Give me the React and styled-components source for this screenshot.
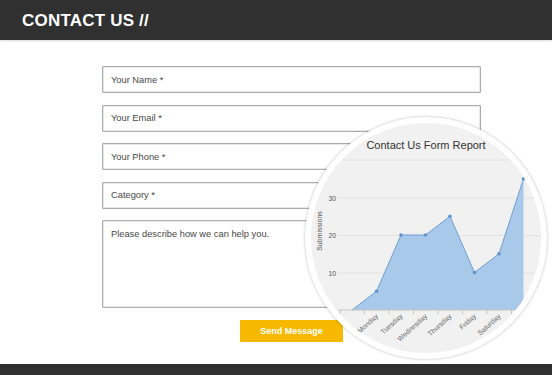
import React from 'react'
import styled, { createGlobalStyle } from 'styled-components'

const Global = createGlobalStyle`
  html, body {
    margin: 0;
    padding: 0;
    background: #fff;
    overflow: hidden;
  }
`;

const Page = styled.div`
  position: relative;
  width: 552px;
  height: 375px;
  font-family: "Liberation Sans", Arial, sans-serif;
`;

const Header = styled.div`
  height: 40px;
  background: #303030;
  display: flex;
  align-items: center;
  padding-left: 22px;
  box-shadow: 0 1px 2px rgba(0, 0, 0, 0.15);
`;

const Title = styled.h1`
  margin: 0;
  color: #fff;
  font-size: 17px;
  font-weight: bold;
  letter-spacing: 0.2px;
  padding-top: 2px;
`;

const Form = styled.div`
  width: 379px;
  margin: 26px 0 0 102px;
  display: flex;
  flex-direction: column;
  gap: 11.5px;
`;

const Field = styled.div`
  box-sizing: border-box;
  height: ${p => (p.$tall ? '88px' : '27px')};
  border: 1px solid #ababab;
  box-shadow: inset 0 0 0 0.5px #d4d4d4;
  border-radius: 1px;
  padding: ${p => (p.$tall ? '8px 8px' : '0 8px')};
  display: flex;
  align-items: ${p => (p.$tall ? 'flex-start' : 'center')};
  font-size: 9.3px;
  color: #474747;
`;

const Button = styled.div`
  align-self: center;
  margin-top: 0.5px;
  width: 103px;
  height: 22px;
  background: #f7b800;
  color: #fff;
  font-size: 9px;
  font-weight: bold;
  display: flex;
  align-items: center;
  justify-content: center;
`;

const Footer = styled.div`
  position: absolute;
  left: 0;
  right: 0;
  bottom: 0;
  height: 11px;
  background: #303030;
`;

const Bubble = styled.div`
  position: absolute;
  left: 305px;
  top: 117px;
  width: 242px;
  height: 242px;
  box-sizing: border-box;
  border-radius: 50%;
  border: 6px solid #fff;
  background: #f1f1f1;
  box-shadow: 0 0 3px rgba(0, 0, 0, 0.28);
  overflow: hidden;
`;

const data = [
  { day: null, v: 0 },
  { day: 'Monday', v: 5 },
  { day: 'Tuesday', v: 20 },
  { day: 'Wednesday', v: 20 },
  { day: 'Thursday', v: 25 },
  { day: 'Friday', v: 10 },
  { day: 'Saturday', v: 15 },
  { day: 'Sunday', v: 35 },
]

const X0 = 352
const STEP = 24.5
const BASE = 310
const UNIT = 3.75

const Chart = () => {
  const pts = data.map((d, i) => [X0 + i * STEP, BASE - d.v * UNIT])
  const line = pts.map(p => p.join(',')).join(' ')
  const last = pts[pts.length - 1]
  const area = `${line} ${last[0]},${BASE} ${X0},${BASE}`
  const grid = [160, 198, 235.5, 273]
  return (
    <svg width="230" height="230" viewBox="311 123 230 230">
      <text x="426" y="149" textAnchor="middle" fontSize="11" fill="#333"
        fontFamily="Liberation Sans, Arial, sans-serif">Contact Us Form Report</text>
      {grid.map(y => (
        <line key={y} x1="338" x2="545" y1={y} y2={y} stroke="#e2e2e2" strokeWidth="1" />
      ))}
      {[['30', 198], ['20', 235.5], ['10', 273]].map(([t, y]) => (
        <text key={t} x="336" y={y + 2.5} textAnchor="end" fontSize="6.8" fill="#555"
          fontFamily="Liberation Sans, Arial, sans-serif">{t}</text>
      ))}
      <text x="0" y="0" transform="translate(322 231) rotate(-90)" textAnchor="middle"
        fontSize="7" fill="#555" fontFamily="Liberation Sans, Arial, sans-serif">Submissions</text>
      <polygon points={area} fill="#a9c9ea" />
      <polyline points={line} fill="none" stroke="#6e9fd3" strokeWidth="1" />
      {pts.slice(1).map(([x, y], i) => (
        <circle key={i} cx={x} cy={y} r="1.8" fill="#5f93cc" />
      ))}
      <line x1="338" x2="545" y1={BASE} y2={BASE} stroke="#c4c4c4" strokeWidth="1" />
      {Array.from({ length: 9 }).map((_, i) => {
        const x = 340 + i * STEP
        return <line key={i} x1={x} x2={x} y1={BASE} y2={BASE + 4} stroke="#c4c4c4" strokeWidth="1" />
      })}
      {pts.slice(1).map(([x], i) => (
        <text key={i} x="0" y="0" transform={`translate(${x + 2} ${BASE + 7}) rotate(-42)`}
          textAnchor="end" fontSize="7" fill="#666"
          fontFamily="Liberation Sans, Arial, sans-serif">{data[i + 1].day}</text>
      ))}
    </svg>
  )
}

const App = () => {
  return (
    <Page>
      <Global />
      <Header>
        <Title>CONTACT US //</Title>
      </Header>
      <Form>
        <Field>Your Name *</Field>
        <Field>Your Email *</Field>
        <Field>Your Phone *</Field>
        <Field>Category *</Field>
        <Field $tall>Please describe how we can help you.</Field>
        <Button>Send Message</Button>
      </Form>
      <Bubble>
        <Chart />
      </Bubble>
      <Footer />
    </Page>
  )
}

export default App
